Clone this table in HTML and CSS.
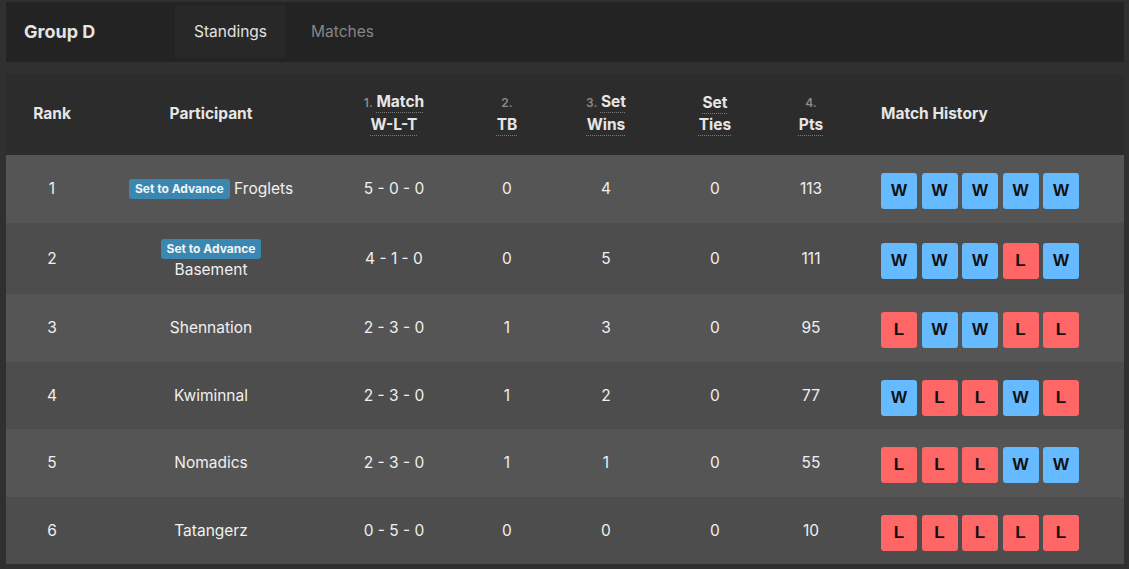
FILE: index.html
```html
<!DOCTYPE html>
<html lang="en">
<head>
<meta charset="utf-8">
<title>Group D</title>
<link rel="stylesheet" href="styles.css">
</head>
<body>
<div class="page">
  <header class="topbar">
    <div class="title">Group D</div>
    <nav class="tabs">
      <span class="tab active">Standings</span>
      <span class="tab">Matches</span>
    </nav>
  </header>

  <section class="card">
    <table class="standings">
      <colgroup>
        <col class="c-rank"><col class="c-part"><col class="c-match"><col class="c-tb">
        <col class="c-sw"><col class="c-st"><col class="c-pts"><col class="c-hist">
      </colgroup>
      <thead>
        <tr>
          <th>Rank</th>
          <th>Participant</th>
          <th><span class="pre">1.</span> <abbr title="Match Win-Loss-Tie">Match<br>W-L-T</abbr></th>
          <th><span class="pre">2.</span><br><abbr title="Tiebreaker">TB</abbr></th>
          <th><span class="pre">3.</span> <abbr title="Set Wins">Set<br>Wins</abbr></th>
          <th><abbr title="Set Ties">Set<br>Ties</abbr></th>
          <th><span class="pre">4.</span><br><abbr title="Points">Pts</abbr></th>
          <th class="hist">Match History</th>
        </tr>
      </thead>
      <tbody>
        <tr>
          <td>1</td>
          <td><span class="adv">Set to Advance</span> Froglets</td>
          <td>5 - 0 - 0</td><td>0</td><td>4</td><td>0</td><td>113</td>
          <td class="hist"><div class="results"><span class="r w">W</span><span class="r w">W</span><span class="r w">W</span><span class="r w">W</span><span class="r w">W</span></div></td>
        </tr>
        <tr>
          <td>2</td>
          <td><div class="stack"><span class="adv">Set to Advance</span><span class="name">Basement</span></div></td>
          <td>4 - 1 - 0</td><td>0</td><td>5</td><td>0</td><td>111</td>
          <td class="hist"><div class="results"><span class="r w">W</span><span class="r w">W</span><span class="r w">W</span><span class="r l">L</span><span class="r w">W</span></div></td>
        </tr>
        <tr>
          <td>3</td>
          <td>Shennation</td>
          <td>2 - 3 - 0</td><td>1</td><td>3</td><td>0</td><td>95</td>
          <td class="hist"><div class="results"><span class="r l">L</span><span class="r w">W</span><span class="r w">W</span><span class="r l">L</span><span class="r l">L</span></div></td>
        </tr>
        <tr>
          <td>4</td>
          <td>Kwiminnal</td>
          <td>2 - 3 - 0</td><td>1</td><td>2</td><td>0</td><td>77</td>
          <td class="hist"><div class="results"><span class="r w">W</span><span class="r l">L</span><span class="r l">L</span><span class="r w">W</span><span class="r l">L</span></div></td>
        </tr>
        <tr>
          <td>5</td>
          <td>Nomadics</td>
          <td>2 - 3 - 0</td><td>1</td><td>1</td><td>0</td><td>55</td>
          <td class="hist"><div class="results"><span class="r l">L</span><span class="r l">L</span><span class="r l">L</span><span class="r w">W</span><span class="r w">W</span></div></td>
        </tr>
        <tr>
          <td>6</td>
          <td>Tatangerz</td>
          <td>0 - 5 - 0</td><td>0</td><td>0</td><td>0</td><td>10</td>
          <td class="hist"><div class="results"><span class="r l">L</span><span class="r l">L</span><span class="r l">L</span><span class="r l">L</span><span class="r l">L</span></div></td>
        </tr>
      </tbody>
    </table>
  </section>
</div>
</body>
</html>
```

FILE: styles.css
```css
* { box-sizing: border-box; }
html, body { margin: 0; padding: 0; }
body {
  background: #303030;
  font-family: Inter, "Noto Sans", sans-serif;
  color: #ececec;
  font-size: 15.5px;
}
.page {
  padding: 2px 5px 5px 6px;
  display: flex;
  flex-direction: column;
  gap: 12px;
}
.topbar {
  background: #232323;
  height: 60px;
  display: flex;
  align-items: stretch;
  padding: 3px 0 4px;
}
.title {
  width: 169px;
  padding-left: 18px;
  display: flex;
  align-items: center;
  font-weight: 700;
  font-size: 18px;
  color: #e4e4e4;
}
.tabs {
  display: flex;
  gap: 6px;
}
.tab {
  display: flex;
  align-items: center;
  padding: 0 19px;
  font-size: 15.5px;
  color: #858585;
}
.tab.active {
  background: #282828;
  color: #e2e2e2;
}
.card {
  background: #2c2c2c;
}
.standings {
  width: 100%;
  border-collapse: collapse;
  table-layout: fixed;
}
.c-rank { width: 92px; }
.c-part { width: 226px; }
.c-match { width: 140px; }
.c-tb { width: 86px; }
.c-sw { width: 112px; }
.c-st { width: 106px; }
.c-pts { width: 86px; }
.standings th {
  height: 81px;
  padding: 0 0 2px;
  font-size: 15.5px;
  font-weight: 700;
  line-height: 22px;
  color: #e6e6e6;
  text-align: center;
  vertical-align: middle;
}
.standings th.hist, .standings td.hist {
  text-align: left;
  padding-left: 27px;
}
.pre {
  font-size: 12px;
  font-weight: 600;
  color: #8a8a8a;
}
abbr {
  text-decoration: underline dotted #7a7a7a;
  text-decoration-thickness: 1px;
  text-underline-offset: 5px;
}
.standings td {
  padding: 14px 0 13.5px;
  text-align: center;
  vertical-align: middle;
  line-height: 24px;
  font-size: 15.5px;
  color: #f0f0f0;
}
.standings tbody tr:nth-child(odd) { background: #555555; }
.standings tbody tr:nth-child(even) { background: #4d4d4d; }
.adv {
  display: inline-block;
  background: #3a88b2;
  color: #f4f4f4;
  font-size: 12px;
  font-weight: 700;
  line-height: 20px;
  height: 20px;
  padding: 0 6px;
  border-radius: 3px;
  vertical-align: 1px;
}
.stack {
  display: flex;
  flex-direction: column;
  align-items: center;
  padding-top: 2px;
}
.stack .name {
  line-height: 22px;
}
.results {
  display: flex;
  gap: 4.5px;
  margin-top: 4px;
}
.r {
  width: 36px;
  height: 36px;
  border-radius: 3px;
  display: flex;
  align-items: center;
  justify-content: center;
  font-family: "Liberation Sans", Arial, sans-serif;
  font-weight: 700;
  font-size: 17px;
  color: #111;
}
.r.w { background: #66baff; }
.r.l { background: #ff6666; }
```
